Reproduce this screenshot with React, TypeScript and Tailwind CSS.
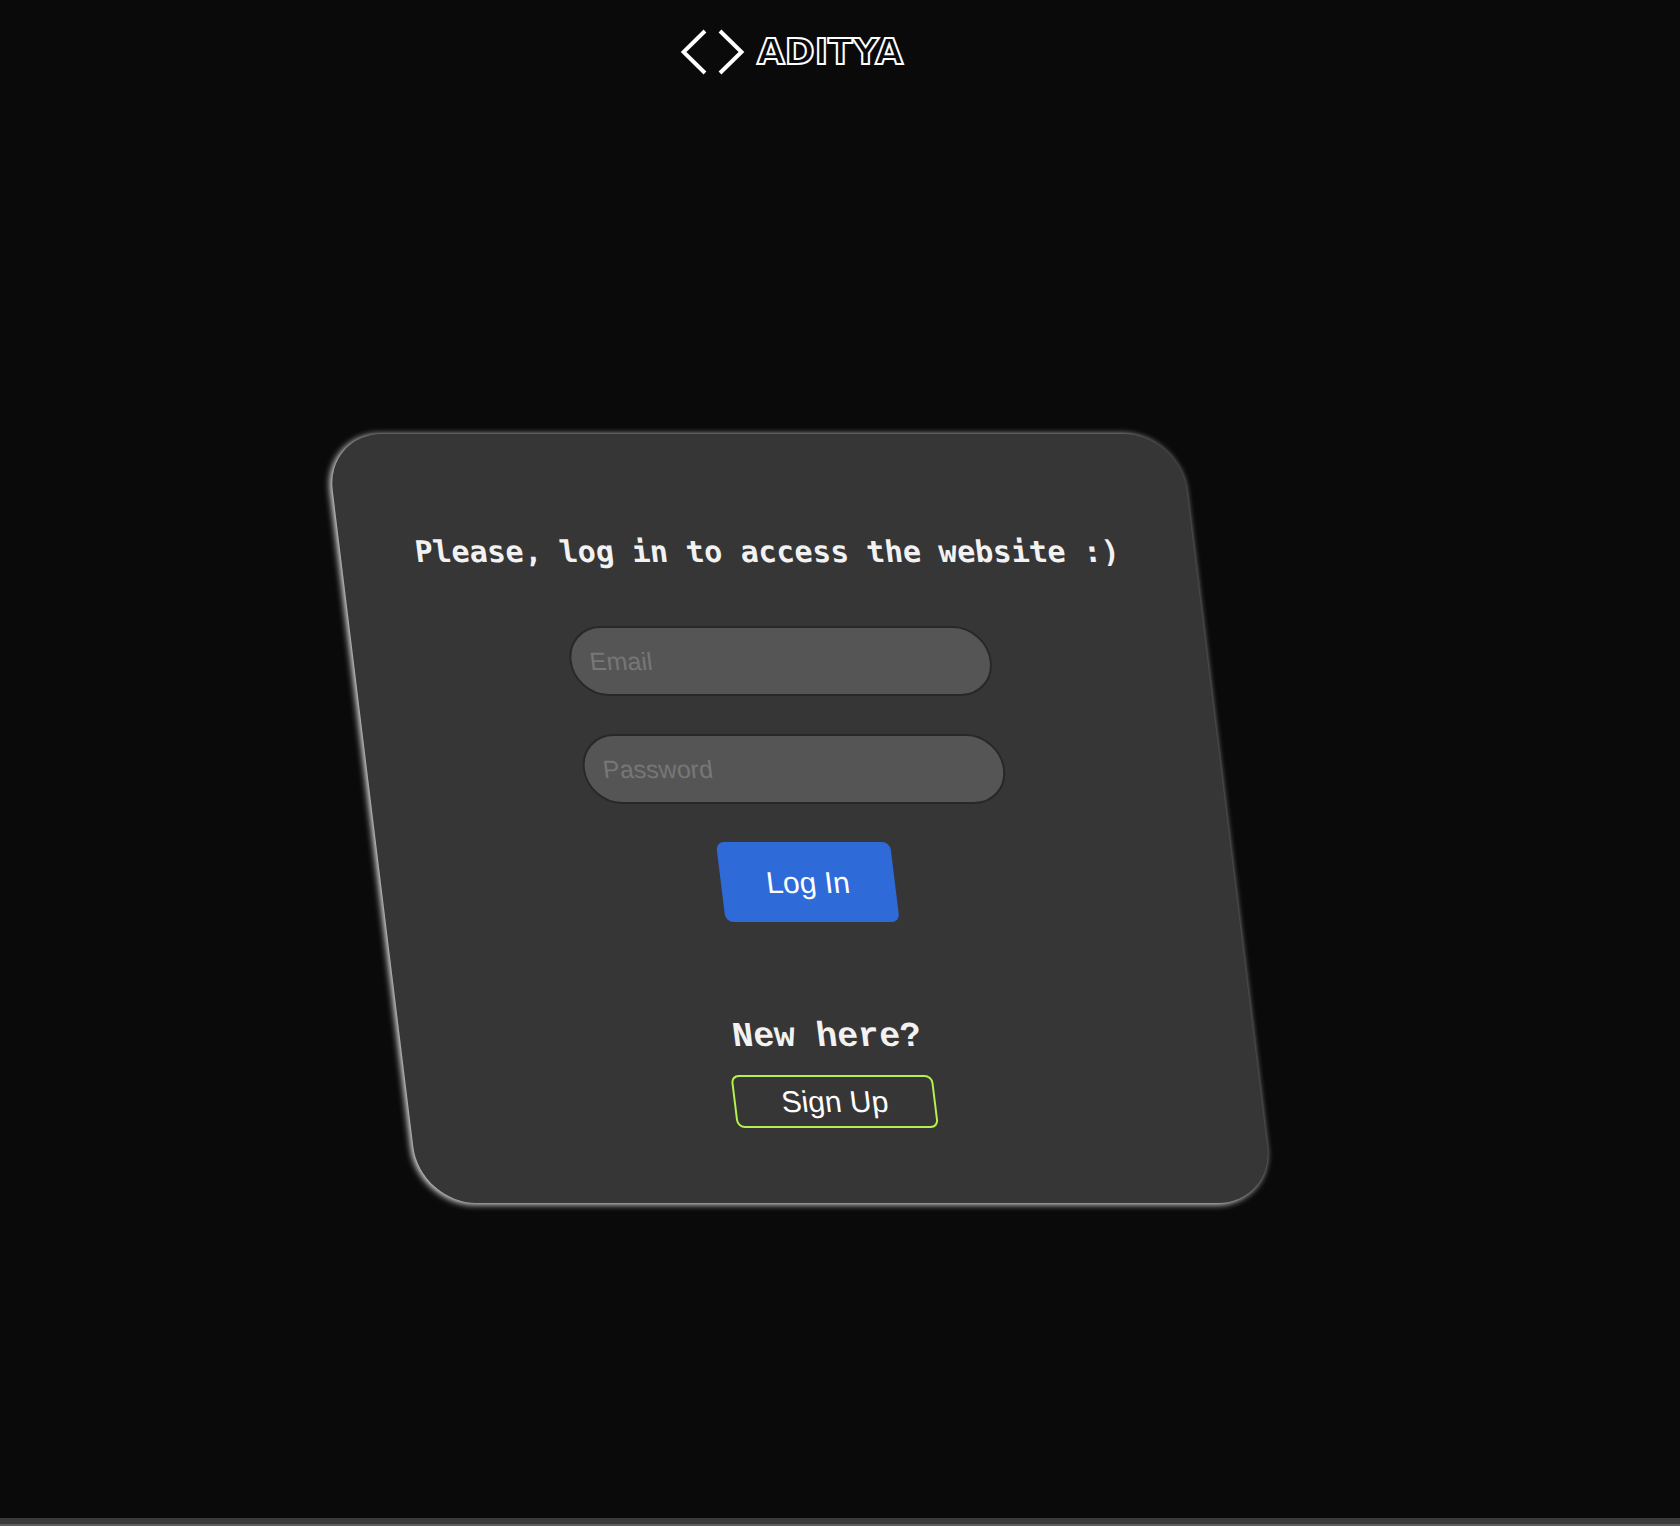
import React from "react";

const inputClass =
  "h-[70px] w-full max-w-[422px] rounded-full border-2 border-[#282828] bg-[#555555] px-[18px] text-[25px] text-white placeholder:text-[#777777] placeholder:opacity-100 outline-none";

function Logo() {
  return (
    <a href="#" aria-label="Aditya home" className="flex items-center gap-3 text-white">
      <svg width="64" height="48" viewBox="0 0 64 48" fill="none" stroke="currentColor" strokeWidth="4">
        <path d="M24 3 2.500 24 24 45" />
        <path d="M39 3 60.500 24 39 45" />
      </svg>
      <span className="font-['DejaVu_Sans'] text-[36px] leading-10 font-bold text-[#0a0a0a] [-webkit-text-stroke:2px_#ffffff]">
        ADITYA
      </span>
    </a>
  );
}

export default function App() {
  return (
    <div className="flex min-h-screen flex-col bg-[#0a0a0a] font-['Liberation_Sans',sans-serif]">
      <header className="flex h-[119px] justify-center pt-7 pr-24">
        <div>
          <Logo />
        </div>
      </header>

      <main className="flex flex-1 items-center justify-center pr-20">
        <form
          onSubmit={(e: React.FormEvent) => e.preventDefault()}
          className="flex w-full max-w-[854px] skew-x-[7deg] flex-col items-center rounded-[56px] bg-[#363636] pt-[98px] pb-[75px] shadow-[-2px_1px_7px_#ffffff]"
        >
          <h1 className="text-center font-['DejaVu_Sans_Mono',monospace] text-[30px] leading-10 font-bold text-[#f2f2f2]">
            Please, log in to access the website :)
          </h1>
          <div className="mt-[54px] flex w-full flex-col items-center gap-[38px]">
            <input type="email" aria-label="Email" placeholder="Email" className={inputClass} />
            <input type="password" aria-label="Password" placeholder="Password" className={inputClass} />
            <button type="submit" className="h-20 w-[174px] rounded-lg bg-[#2e6bd9] text-[30px] text-white">
              Log In
            </button>
          </div>
          <h2 className="mt-[95px] font-['Liberation_Mono',monospace] text-[35px] leading-10 font-bold text-[#f2f2f2]">
            New here?
          </h2>
          <button
            type="button"
            className="mt-[18px] h-[53px] w-[202px] rounded-lg border-2 border-[#b4f04e] text-[30px] leading-none text-white"
          >
            Sign Up
          </button>
        </form>
      </main>

      <footer className="h-2 border-b-2 border-[#5f5c5c] bg-[#3b3b3b]" />
    </div>
  );
}
